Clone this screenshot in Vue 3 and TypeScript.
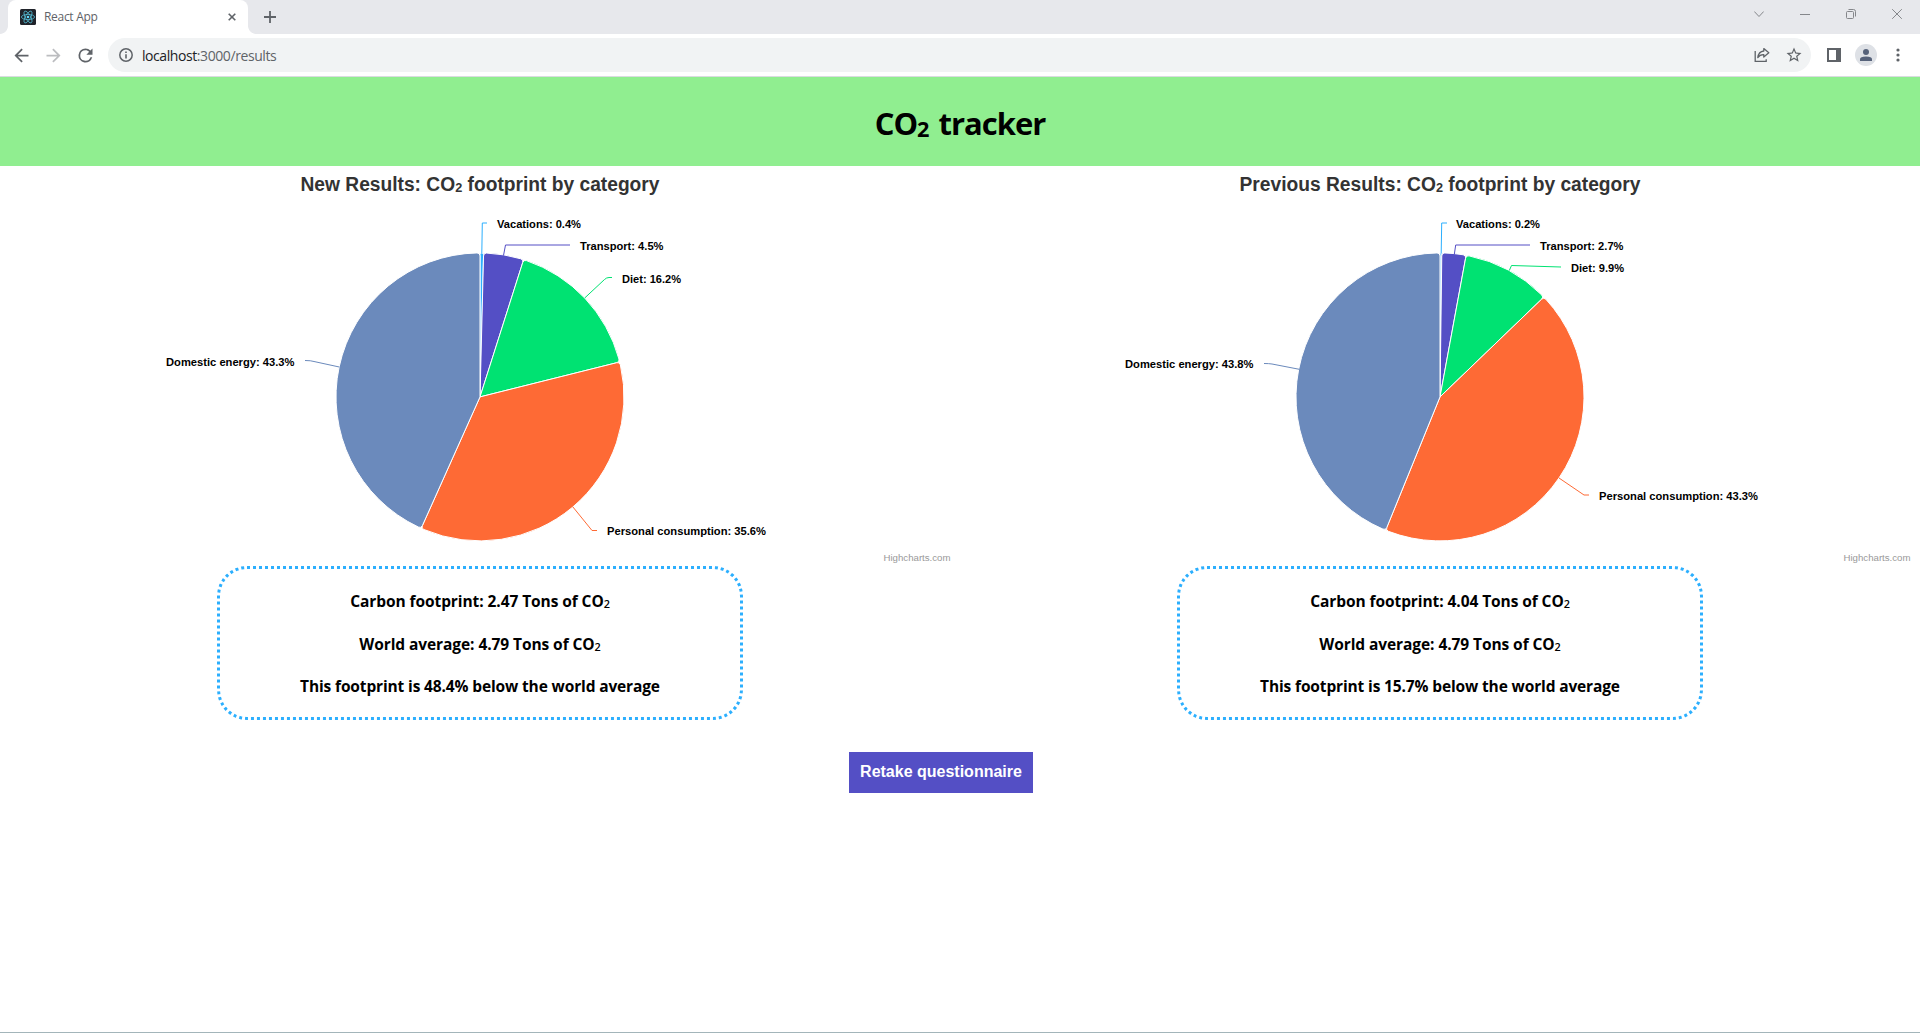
<script setup lang="ts">
interface Slice {
  name: string
  value: number
  color: string
  labelX: number
  labelY: number
  labelWidth: number
  connector: string
}

interface Result {
  title: string
  titleX: number
  titleWidth: number
  slices: Slice[]
  footprint: string
  difference: string
}

const CX = 480
const CY = 230.9
const R = 144

const results: Result[] = [
  {
    title: 'New Results: CO',
    titleX: 300.5,
    titleWidth: 359,
    footprint: '2.47',
    difference: '48.4%',
    slices: [
      { name: 'Vacations', value: 0.4, color: '#2caffe', labelX: 497, labelY: 62, labelWidth: 84, connector: 'M487 57 L482.3 57 L481.8 87.5' },
      { name: 'Transport', value: 4.5, color: '#544fc5', labelX: 580, labelY: 84, labelWidth: 83.5, connector: 'M570 79 L505.5 79 L503.5 89.5' },
      { name: 'Diet', value: 16.2, color: '#00e272', labelX: 622, labelY: 117, labelWidth: 59, connector: 'M612 111.5 L609 111.5 Q606.5 111.5 604.5 113.5 L584.7 132' },
      { name: 'Personal consumption', value: 35.6, color: '#fe6a35', labelX: 607, labelY: 369, labelWidth: 159, connector: 'M597 364.5 L592 364.5 L572.7 340.7' },
      { name: 'Domestic energy', value: 43.3, color: '#6b8abc', labelX: 166, labelY: 200, labelWidth: 128.5, connector: 'M305 194.5 Q311 194.5 314 195.5 L339.3 201' },
    ],
  },
  {
    title: 'Previous Results: CO',
    titleX: 279.5,
    titleWidth: 401,
    footprint: '4.04',
    difference: '15.7%',
    slices: [
      { name: 'Vacations', value: 0.2, color: '#2caffe', labelX: 496, labelY: 62, labelWidth: 84, connector: 'M487 57 L481.7 57 L481.2 87.5' },
      { name: 'Transport', value: 2.7, color: '#544fc5', labelX: 580, labelY: 84, labelWidth: 83.5, connector: 'M570 79 L495.7 79 L494.3 88.5' },
      { name: 'Diet', value: 9.9, color: '#00e272', labelX: 611, labelY: 106, labelWidth: 53, connector: 'M601 101 L551.5 99.5 L549.3 104.5' },
      { name: 'Personal consumption', value: 43.3, color: '#fe6a35', labelX: 639, labelY: 334, labelWidth: 159, connector: 'M629 329 L624 329 L599 312' },
      { name: 'Domestic energy', value: 43.8, color: '#6b8abc', labelX: 165, labelY: 202, labelWidth: 128.5, connector: 'M304 197.5 Q309 197.5 312 198 L339.3 203.3' },
    ],
  },
]

const polar = (angle: number, radius: number): string =>
  `${(CX + radius * Math.sin(angle)).toFixed(2)} ${(CY - radius * Math.cos(angle)).toFixed(2)}`

/* Pie slice with softly rounded outer corners */
function slicePath(slices: Slice[], index: number): string {
  const total = slices.reduce((sum, s) => sum + s.value, 0)
  const before = slices.slice(0, index).reduce((sum, s) => sum + s.value, 0)
  const start = (before / total) * Math.PI * 2
  const end = ((before + slices[index].value) / total) * Math.PI * 2
  const corner = Math.min(3, ((end - start) * R) / 2)
  const d = corner / R
  const large = end - start > Math.PI ? 1 : 0
  return [
    `M${CX} ${CY}`,
    `L${polar(start, R - corner)}`,
    `Q${polar(start, R)} ${polar(start + d, R)}`,
    `A${R} ${R} 0 ${large} 1 ${polar(end - d, R)}`,
    `Q${polar(end, R)} ${polar(end, R - corner)}`,
    'Z',
  ].join(' ')
}
</script>

<template>
  <div class="window">
    <div class="tabstrip">
      <div class="tab">
        <svg class="favicon" width="16" height="16" viewBox="0 0 16 16">
          <rect width="16" height="16" rx="1.5" fill="#20232a" />
          <g fill="none" stroke="#53b9d1" stroke-width=".8">
            <ellipse cx="8" cy="8" rx="6.6" ry="2.6" />
            <ellipse cx="8" cy="8" rx="6.6" ry="2.6" transform="rotate(60 8 8)" />
            <ellipse cx="8" cy="8" rx="6.6" ry="2.6" transform="rotate(120 8 8)" />
          </g>
          <circle cx="8" cy="8" r="1.3" fill="#61dafb" />
        </svg>
        <span class="tab-title">React App</span>
        <svg class="tab-close" width="8" height="8" viewBox="0 0 8 8"><path d="M.7.7 7.3 7.3M7.3.7.7 7.3" stroke="#5f6368" stroke-width="1.6" /></svg>
      </div>
      <svg class="new-tab" width="12" height="12" viewBox="0 0 12 12"><path d="M6 0V12M0 6H12" stroke="#5f6368" stroke-width="1.8" /></svg>
      <div class="window-controls">
        <svg width="10" height="10" viewBox="0 0 10 10"><path d="M.3 2.5 5 7.5 9.7 2.5" /></svg>
        <svg width="10" height="10" viewBox="0 0 10 10"><path d="M0 5.5H10" /></svg>
        <svg width="10" height="10" viewBox="0 0 10 10"><rect x=".5" y="2.5" width="7" height="7" rx="1" /><path d="M2.5.5H7.5Q9.5.5 9.5 2.5V7.5" /></svg>
        <svg width="10" height="10" viewBox="0 0 10 10"><path d="M.2.2 9.8 9.8M9.8.2.2 9.8" /></svg>
      </div>
    </div>

    <div class="toolbar">
      <div class="nav">
        <svg width="21" height="21" viewBox="0 0 24 24"><path fill="#5f6368" d="M20 11H7.83l5.59-5.59L12 4l-8 8 8 8 1.41-1.41L7.83 13H20z" /></svg>
        <svg width="21" height="21" viewBox="0 0 24 24"><path fill="#bcbdc0" d="M4 11h12.17l-5.59-5.59L12 4l8 8-8 8-1.41-1.41L16.17 13H4z" /></svg>
        <svg width="21" height="21" viewBox="0 0 24 24"><path fill="#5f6368" d="M17.65 6.35A7.96 7.96 0 0 0 12 4a8 8 0 1 0 7.73 10h-2.08A6 6 0 1 1 12 6c1.66 0 3.14.69 4.22 1.78L13 11h7V4z" /></svg>
      </div>
      <div class="omnibox">
        <svg width="14" height="14" viewBox="0 0 14 14"><circle cx="7" cy="7" r="6.2" fill="none" stroke="#5f6368" stroke-width="1.5" /><path d="M7 6.2V10.4M7 3.5V5" stroke="#5f6368" stroke-width="1.6" /></svg>
        <span class="url"><b>localhost</b>:3000/results</span>
        <svg class="share" width="16" height="16" viewBox="0 0 16 16" fill="none" stroke="#5f6368" stroke-width="1.3"><path d="M1.2 4V14.4H12.2V12.3" /><path d="M9.8 1.6 14.8 5.8 9.8 10V7.6Q6 7.4 3.8 10.6Q4.6 4.6 9.8 4Z" stroke-linejoin="round" /></svg>
        <svg class="star" width="18" height="18" viewBox="0 0 24 24"><path fill="#5f6368" d="m22 9.24-7.19-.62L12 2 9.19 8.63 2 9.24l5.46 4.73L5.82 21 12 17.27 18.18 21l-1.63-7.03zM12 15.4l-3.76 2.27 1-4.28-3.32-2.88 4.38-.38L12 6.1l1.71 4.04 4.38.38-3.32 2.88 1 4.28z" /></svg>
      </div>
      <svg class="panel-icon" width="14" height="14" viewBox="0 0 14 14"><path fill="#5f6368" fill-rule="evenodd" d="M0 0H14V14H0zM2 2V12H9V2z" /></svg>
      <svg class="avatar" width="22" height="22" viewBox="0 0 22 22"><circle cx="11" cy="11" r="11" fill="#dee1e6" /><circle cx="11" cy="8" r="3" fill="#56627a" /><path d="M5 17V15.2Q5 12.4 11 12.4T17 15.2V17z" fill="#56627a" /></svg>
      <svg class="dots" width="4" height="14" viewBox="0 0 4 14" fill="#5f6368"><circle cx="2" cy="2" r="1.6" /><circle cx="2" cy="7" r="1.6" /><circle cx="2" cy="12" r="1.6" /></svg>
    </div>

    <header class="banner">
      <h1>CO<sub>2</sub> tracker</h1>
    </header>

    <main>
      <div class="results">
        <section v-for="result in results" :key="result.title" class="result">
          <svg class="chart" width="960" height="400" viewBox="0 0 960 400">
            <text class="chart-title" :x="result.titleX" y="25" :textLength="result.titleWidth" lengthAdjust="spacingAndGlyphs">{{ result.title }}<tspan class="chart-sub" dy="1">2</tspan><tspan dy="-1"> footprint by category</tspan></text>
            <path v-for="(slice, i) in result.slices" :key="slice.name" :d="slicePath(result.slices, i)" :fill="slice.color" stroke="#fff" stroke-linejoin="round" />
            <g v-for="slice in result.slices" :key="slice.name">
              <path :d="slice.connector" fill="none" :stroke="slice.color" />
              <text class="label" :x="slice.labelX" :y="slice.labelY" :textLength="slice.labelWidth" lengthAdjust="spacingAndGlyphs">{{ slice.name }}: {{ slice.value }}%</text>
            </g>
            <text class="credits" x="883.5" y="395" textLength="67" lengthAdjust="spacingAndGlyphs">Highcharts.com</text>
          </svg>
          <div class="summary">
            <p>Carbon footprint: {{ result.footprint }} Tons of CO<sub>2</sub></p>
            <p>World average: 4.79 Tons of CO<sub>2</sub></p>
            <p class="compare">This footprint is {{ result.difference }} below the world average</p>
          </div>
        </section>
      </div>
      <button class="retake" type="button">Retake questionnaire</button>
    </main>
  </div>
</template>

<style>
body {
  margin: 0;
  background: #fff;
  overflow: hidden;
}
</style>

<style scoped>
.window {
  display: flex;
  flex-direction: column;
  box-sizing: border-box;
  width: 1920px;
  height: 1033px;
  border-bottom: 1px solid #a3b5ba;
  font-family: "Open Sans", "Noto Sans", sans-serif;
  background: #fff;
}
svg {
  display: block;
  flex: none;
}
.tabstrip {
  display: flex;
  align-items: center;
  height: 34px;
  padding-left: 8px;
  background: #e7e8ec;
}
.tab {
  position: relative;
  display: flex;
  align-items: center;
  box-sizing: border-box;
  width: 240px;
  height: 34px;
  padding: 0 12px;
  border-radius: 8px 8px 0 0;
  background: #fff;
}
.tab::before,
.tab::after {
  content: "";
  position: absolute;
  bottom: 0;
  width: 8px;
  height: 8px;
}
.tab::before {
  left: -8px;
  background: radial-gradient(circle at 0 0, transparent 7.5px, #fff 8.2px);
}
.tab::after {
  right: -8px;
  background: radial-gradient(circle at 100% 0, transparent 7.5px, #fff 8.2px);
}
.tab-title {
  flex: 1;
  margin-left: 8px;
  font-size: 12px;
  letter-spacing: -0.3px;
  line-height: 34px;
  color: #5f6368;
}
.new-tab {
  margin-left: 16px;
}
.window-controls {
  display: flex;
  gap: 36px;
  margin: -6px 18px 0 auto;
  fill: none;
  stroke: #85878b;
}
.toolbar {
  display: flex;
  align-items: center;
  box-sizing: border-box;
  height: 43px;
  padding: 0 19px 0 11px;
  border-bottom: 1px solid #dadce0;
}
.nav {
  display: flex;
  gap: 11.2px;
}
.omnibox {
  display: flex;
  align-items: center;
  box-sizing: border-box;
  width: 1703.4px;
  height: 34px;
  margin-left: 11.6px;
  padding: 0 8.5px 0 11px;
  border-radius: 17px;
  background: #f1f3f4;
}
.url {
  margin-left: 9px;
  font-size: 14px;
  letter-spacing: -0.42px;
  color: #5f6368;
}
.url b {
  font-weight: 400;
  color: #202124;
}
.share {
  margin-left: auto;
}
.star {
  margin-left: 14.5px;
}
.panel-icon {
  margin-left: 16px;
}
.avatar {
  margin-left: 14px;
}
.dots {
  margin-left: 19px;
}
.banner {
  height: 89px;
  background: #90ee90;
  text-align: center;
}
h1 {
  margin: 0;
  font-size: 31px;
  letter-spacing: -1px;
  word-spacing: 3px;
  line-height: 93px;
  font-weight: 700;
  color: #000;
}
sub {
  position: relative;
  top: 2px;
  vertical-align: baseline;
  font-size: 0.7em;
  line-height: 0;
}
.results {
  display: flex;
}
.result {
  display: flex;
  flex-direction: column;
  align-items: center;
  width: 960px;
}
.chart {
  font-family: "Liberation Sans", Arial, sans-serif;
}
.chart-title {
  font-size: 19.6px;
  font-weight: 700;
  fill: #333;
}
.chart-sub {
  font-size: 13px;
}
.label {
  font-size: 11.2px;
  font-weight: 700;
  fill: #000;
}
.credits {
  font-size: 9.6px;
  fill: #999;
}
.summary {
  box-sizing: border-box;
  width: 526px;
  height: 154px;
  padding-top: 20px;
  border: 3px dotted #2caffe;
  border-radius: 30px;
  text-align: center;
}
.summary p {
  margin: 0 0 18.6px;
  font-size: 15.5px;
  letter-spacing: -0.08px;
  font-weight: 700;
  line-height: 24px;
  color: #000;
}
.summary .compare {
  letter-spacing: -0.14px;
}
.summary sub {
  top: 1px;
  font-weight: 600;
}
.retake {
  display: block;
  width: 184px;
  height: 41px;
  margin: 32px 0 0 849px;
  padding: 0 0 2px;
  border: 0;
  background: #544fc5;
  color: #fff;
  font: 700 16px/39px "Liberation Sans", Arial, sans-serif;
}
</style>
